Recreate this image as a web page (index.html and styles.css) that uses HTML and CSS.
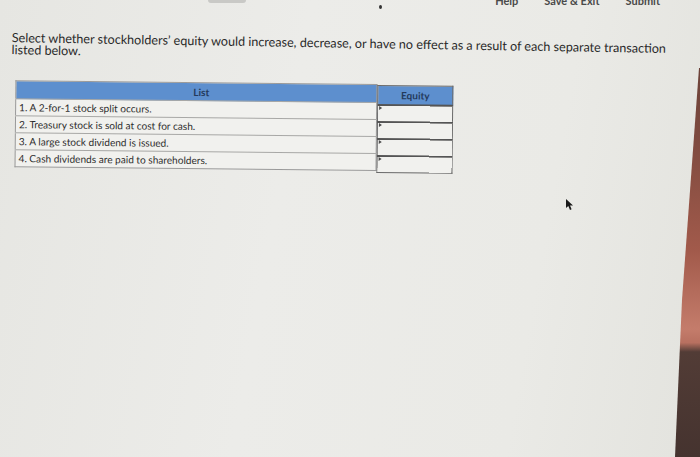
FILE: index.html
```html
<!DOCTYPE html>
<html>
<head>
<meta charset="utf-8">
<link rel="stylesheet" href="styles.css">
</head>
<body>
<div class="screen">
  <header class="topbar">
    <div class="tab-stub"></div>
    <div class="dot"></div>
    <nav class="nav">
      <span>Help</span>
      <span>Save &amp; Exit</span>
      <span>Submit</span>
    </nav>
  </header>
  <main class="content">
    <p class="prompt">Select whether stockholders’ equity would increase, decrease, or have no effect as a result of each separate transaction listed below.</p>
    <div class="tables">
      <table class="list">
        <thead><tr><th>List</th></tr></thead>
        <tbody>
          <tr><td>1. A 2-for-1 stock split occurs.</td></tr>
          <tr><td>2. Treasury stock is sold at cost for cash.</td></tr>
          <tr><td>3. A large stock dividend is issued.</td></tr>
          <tr><td>4. Cash dividends are paid to shareholders.</td></tr>
        </tbody>
      </table>
      <table class="equity">
        <thead><tr><th>Equity</th></tr></thead>
        <tbody>
          <tr><td><span class="caret"></span></td></tr>
          <tr><td><span class="caret"></span></td></tr>
          <tr><td><span class="caret"></span></td></tr>
          <tr><td><span class="caret"></span></td></tr>
        </tbody>
      </table>
    </div>
  </main>
  <svg class="cursor" width="9" height="13" viewBox="0 0 9 13"><path d="M1 1 L1 10 L3.3 8 L5 12 L6.6 11.3 L5 7.6 L8 7.4 Z" fill="#1a1a1a"/></svg>
  <div class="edge"></div>
</div>
</body>
</html>
```
FILE: styles.css
```css
html, body {
  margin: 0;
  padding: 0;
}
body {
  width: 700px;
  height: 457px;
  overflow: hidden;
  font-family: "Lato", "Liberation Sans", sans-serif;
  color: #2b2b2b;
}
.screen {
  position: relative;
  width: 700px;
  height: 457px;
  background: linear-gradient(100deg, #e6e6e2 0%, #ecece9 40%, #eaeae6 75%, #e3e3de 100%);
  overflow: hidden;
}
.topbar {
  height: 24px;
  position: relative;
}
.tab-stub {
  position: absolute;
  left: 208px;
  top: 0;
  width: 38px;
  height: 3px;
  background: #c9c9c6;
  border-radius: 0 0 3px 3px;
}
.dot {
  position: absolute;
  left: 379px;
  top: 5px;
  width: 3px;
  height: 4px;
  border-radius: 50%;
  background: #333;
}
.nav {
  position: absolute;
  right: 40px;
  top: -6px;
  display: flex;
  gap: 26px;
  font-size: 11px;
  font-weight: 700;
  color: #4a4a4a;
}
.content {
  padding: 8px 12px 0 12px;
  transform: rotate(0.6deg);
  transform-origin: left top;
}
.prompt {
  margin: 0;
  font-size: 12.6px;
  line-height: 12px;
  color: #2a2a2a;
  width: 664px;
  transform: rotate(0.35deg);
  transform-origin: left top;
}
.tables {
  display: flex;
  align-items: flex-start;
  margin-top: 24px;
  margin-left: 4px;
}
table {
  border-collapse: collapse;
  font-size: 10.1px;
}
.list {
  width: 362px;
  border: 1px solid #9a9a9a;
}
.list th {
  background: #5d8fce;
  color: #243a5c;
  font-weight: 700;
  height: 17px;
  padding: 0;
  text-align: center;
  font-size: 10px;
  text-indent: 10px;
}
.list td {
  background: #f1f1ee;
  border-top: 1px solid #a8a8a6;
  height: 16px;
  padding: 0 0 0 3px;
  color: #2d2d2d;
  white-space: nowrap;
}
.equity {
  width: 76px;
  margin-top: 1px;
  border: 1px solid #6a6a6a;
}
.equity th {
  background: #5d8fce;
  color: #243a5c;
  font-weight: 700;
  height: 18px;
  padding: 0;
  font-size: 10px;
  border-bottom: 1px solid #4a6a96;
}
.equity td {
  background: #f1f1ee;
  border-top: 2px solid #555;
  height: 15px;
  padding: 0;
  position: relative;
}
.caret {
  position: absolute;
  left: 1px;
  top: 0;
  width: 0;
  height: 0;
  border-top: 2px solid transparent;
  border-bottom: 2px solid transparent;
  border-left: 3px solid #4d4d4d;
}
.cursor {
  position: absolute;
  left: 565px;
  top: 198px;
}
.edge {
  position: absolute;
  right: 0;
  top: 0;
  width: 26px;
  height: 457px;
  background: linear-gradient(180deg, #5a3a32 0%, #7e4a3f 30%, #a25a4b 55%, #c47c6b 72%, #b87060 75%, #523c36 77%, #45332f 100%);
  clip-path: polygon(25px 68px, 26px 68px, 26px 457px, 1px 457px, 8px 300px);
}
```
